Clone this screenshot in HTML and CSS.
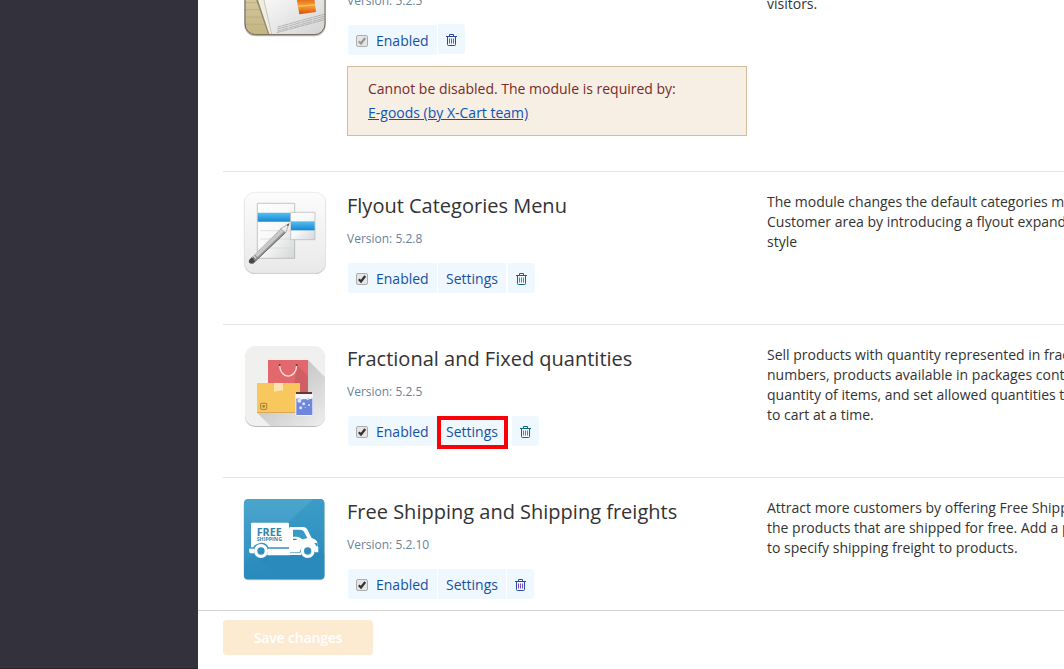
FILE: index.html
```html
<!DOCTYPE html>
<html lang="en">
<head>
<meta charset="utf-8">
<title>Modules</title>
<link rel="stylesheet" href="styles.css">
</head>
<body>
<svg class="sprite" aria-hidden="true">
  <symbol id="trash" viewBox="0 0 11 12">
    <path d="M3.5 2V.5h4V2M0 2.5h11M1.5 3v7.5q0 1 1 1h6q1 0 1-1V3" fill="none" stroke="currentColor"/>
    <path class="trash-ribs" d="M3.5 4.5v5M5.5 4.5v5M7.5 4.5v5" fill="none"/>
  </symbol>
  <symbol id="check" viewBox="0 0 12 12">
    <rect x=".5" y=".5" width="11" height="11" rx="1.5" fill="#e6e6e6" stroke="#adadad"/>
    <path d="M2.8 6.2 5 8.5 9.2 3" fill="none" stroke="currentColor" stroke-width="2.2"/>
  </symbol>
</svg>
<aside class="sidebar"></aside>
<main class="main">
  <div class="modules">
    <section class="module">
      <svg class="module-icon" viewBox="21 18 258 258">
        <defs>
          <linearGradient id="sand" x2="0" y2="1"><stop offset="0" stop-color="#e8dfc0"/><stop offset="1" stop-color="#c3b482"/></linearGradient>
          <linearGradient id="paper" x2="1" y2="1"><stop offset="0" stop-color="#fff"/><stop offset="1" stop-color="#d2d2d2"/></linearGradient>
          <linearGradient id="sunset" x2="0" y2="1"><stop offset="0" stop-color="#d94c08"/><stop offset=".55" stop-color="#f7a238"/><stop offset="1" stop-color="#d64d08"/></linearGradient>
          <clipPath id="iconClip"><rect x="30" y="22" width="240" height="240" rx="31"/></clipPath>
        </defs>
        <rect x="28" y="26" width="244" height="242" rx="33" fill="#bbb"/>
        <g clip-path="url(#iconClip)">
          <path d="M28 20h244v244H28z" fill="url(#sand)"/>
          <path d="M28 167h70M28 188h75M28 210h80M28 232h85" stroke="#b5a777" stroke-width="2"/>
          <path d="M50 120 100 264h12L62 120z" fill="#968a65"/>
          <path d="M56 120 104 264h12L76 120z" fill="#efeee5"/>
          <path d="M78 120h195v144H111z" fill="url(#paper)"/>
          <path d="m78 120 32 142" stroke="#ccc6b4" stroke-width="3"/>
          <path d="m184 150 53-4 6 49-50 7z" fill="url(#sunset)"/>
          <path d="m190 178 50-5" stroke="#ffc35c" stroke-width="4"/>
          <path d="m128 240 142-39M127 246l143-39M127 252l143-39M125 257l145-39" stroke="#aaa" stroke-width="2.5" stroke-dasharray="12 1 22 2"/>
        </g>
        <rect x="30" y="22" width="240" height="241" rx="32" fill="none" stroke="#6f6754" stroke-width="3"/>
      </svg>
      <div class="module-info">
        <h2 class="module-name"></h2>
        <div class="module-version">Version: 5.2.5</div>
        <div class="actions">
          <span class="action action-enabled is-locked"><svg class="checkbox"><use href="#check"/></svg>Enabled</span>
          <span class="action action-trash is-raised"><svg class="trash trash-violet"><use href="#trash"/></svg></span>
        </div>
        <div class="notice">Cannot be disabled. The module is required by:<br><a class="notice-link" href="#">E-goods (by X-Cart team)</a></div>
      </div>
      <p class="module-text is-cut">visitors.</p>
    </section>

    <section class="module">
      <svg class="module-icon" viewBox="21 18 258 258">
        <defs>
          <linearGradient id="tile" x2="0" y2="1"><stop offset="0" stop-color="#fcfcfc"/><stop offset="1" stop-color="#e9e9e9"/></linearGradient>
          <linearGradient id="bar" x2="0" y2="1"><stop offset="0" stop-color="#55bff0"/><stop offset="1" stop-color="#1488d4"/></linearGradient>
          <linearGradient id="sheet" x2="1" y2="1"><stop offset="0" stop-color="#fff"/><stop offset=".5" stop-color="#f8f8f8"/><stop offset="1" stop-color="#d4d7d8"/></linearGradient>
        </defs>
        <rect x="27" y="24" width="246" height="243" rx="32" fill="#c6cacc"/>
        <rect x="28" y="22" width="244" height="242" rx="31" fill="url(#tile)" stroke="#e4e4e4" stroke-width="2"/>
        <path d="M67 55h112v165H67z" fill="url(#sheet)" stroke="#aaa" stroke-width="2"/>
        <path d="M76 137h95M76 162h95M76 189h95" stroke="#d4d4d4" stroke-width="2"/>
        <path d="M68 83h99v27H68z" fill="url(#bar)"/>
        <path d="M167 82h73v82h-73z" fill="url(#sheet)" stroke="#b5b5b5" stroke-width="2"/>
        <path d="M168 109h71v27h-71z" fill="url(#bar)"/>
        <path d="m42 226 95-95 25-15-10 27-98 93q-14 2-12-10z" fill="#999"/>
        <path d="m50 218 89-87 8 8-90 87z" fill="#c9c9c9"/>
        <path d="m54 235 98-93" stroke="#6a6a6a" stroke-width="3"/>
        <path d="m137 131 25-15-10 27z" fill="#eee" stroke="#888" stroke-width="1.5"/>
        <path d="m155 120 8-5-4 9z" fill="#444"/>
        <path d="m42 226 8-9q8 2 10 12l-6 6q-14 3-12-9z" fill="#484848"/>
        <path d="m53 215 10 11m-4-16 9 10" stroke="#777" stroke-width="3"/>
      </svg>
      <div class="module-info">
        <h2 class="module-name">Flyout Categories Menu</h2>
        <div class="module-version">Version: 5.2.8</div>
        <div class="actions">
          <span class="action action-enabled"><svg class="checkbox"><use href="#check"/></svg>Enabled</span>
          <span class="action">Settings</span>
          <span class="action action-trash"><svg class="trash trash-green"><use href="#trash"/></svg></span>
        </div>
      </div>
      <p class="module-text">The module changes the default categories menu in the<br>Customer area by introducing a flyout expandable menu<br>style</p>
    </section>

    <section class="module">
      <svg class="module-icon" viewBox="21 18 258 258">
        <defs>
          <linearGradient id="shade" gradientUnits="userSpaceOnUse" x1="150" y1="140" x2="260" y2="265"><stop offset="0" stop-color="#c8c8c8"/><stop offset="1" stop-color="#ededed"/></linearGradient>
        </defs>
        <rect x="30" y="27" width="240" height="240" rx="31" fill="#b9b9b9"/>
        <rect x="30" y="24" width="240" height="240" rx="31" fill="#f0f0ef"/>
        <path d="m219 66 51 52v115q-1 31-31 31H106l-40-40z" fill="url(#shade)"/>
        <path d="M99 66h120v100H99z" fill="#e2686d"/>
        <path d="m187 82 32 32v52h-46z" fill="#cf5f64"/>
        <path d="M134 83c2 42 49 42 51 0" fill="none" stroke="#f5e4e2" stroke-width="4"/>
        <circle cx="134" cy="81" r="3" fill="#7d3339"/><circle cx="185" cy="81" r="3" fill="#7d3339"/>
        <path d="M66 135h129v90H66z" fill="#f8c85f"/>
        <path d="M66 222h115v3H66z" fill="#d9a94d"/>
        <path d="M117 135h27v23q-13-2-27 4z" fill="#fde4b2"/>
        <rect x="77" y="196" width="18" height="18" rx="2" fill="none" stroke="#a77c34" stroke-width="3"/>
        <circle cx="86" cy="205" r="4" fill="#a77c34"/>
        <rect x="181" y="166" width="53" height="67" rx="4" fill="#f5f4f8"/>
        <path d="M184 179h48v52h-48z" fill="#6e87dc"/>
        <path d="M182 168h51v13q-9 5-14 0-8 5-12 1-11 6-14-1-7 2-11 0z" fill="#f6f4f5"/>
        <path d="M183 162h48v6h-48z" fill="#63383c"/>
        <g fill="#dce5ff"><circle cx="193" cy="188" r="6"/><circle cx="206" cy="197" r="4.5"/><circle cx="197" cy="209" r="4.5"/><circle cx="222" cy="201" r="3"/><circle cx="218" cy="184" r="3"/><circle cx="211" cy="208" r="1.5"/></g>
      </svg>
      <div class="module-info">
        <h2 class="module-name">Fractional and Fixed quantities</h2>
        <div class="module-version">Version: 5.2.5</div>
        <div class="actions">
          <span class="action action-enabled"><svg class="checkbox"><use href="#check"/></svg>Enabled</span>
          <span class="action is-highlighted">Settings</span>
          <span class="action action-trash"><svg class="trash trash-green"><use href="#trash"/></svg></span>
        </div>
      </div>
      <p class="module-text">Sell products with quantity represented in fractional<br>numbers, products available in packages containing a<br>quantity of items, and set allowed quantities to be added<br>to cart at a time.</p>
    </section>

    <section class="module">
      <svg class="module-icon" viewBox="21 21 258 258">
        <defs>
          <linearGradient id="blue" x2="0" y2="1"><stop offset="0" stop-color="#4ba6cd"/><stop offset="1" stop-color="#2b8abc"/></linearGradient>
          <linearGradient id="fade" x2="0" y2="1"><stop offset="0" stop-color="#2585b6"/><stop offset="1" stop-color="#2b8abc"/></linearGradient>
        </defs>
        <rect x="26" y="29" width="243" height="242" rx="13" fill="#c1c8cb"/>
        <rect x="27" y="27" width="241" height="241" rx="12" fill="url(#blue)"/>
        <path d="M27 220 235 27h21q12 0 12 12v217q0 12-12 12H39q-12 0-12-12z" fill="#238abc" opacity=".35"/>
        <path d="m60 196 72 72h124q12 0 12-12v-65l-33-33z" fill="url(#fade)" opacity=".6"/>
        <path d="M52 98h106q4 0 4 4v70h-62q-8-20-32-11-10 3-13 11h-7v-70q0-4 4-4z" fill="#fff"/>
        <path d="M42 176h15v14H45q-3-4-3-14zM99 176h63v-60q0-5 5-5h38q7 0 11 6l14 27q16 5 17 14v9l3 5v15h-10q-6-25-30-20-13 3-16 20l-26 2-4 7h-67z" fill="#fff"/>
        <path d="M174 119h23q6 0 9 5l11 20-9 3-7 1q-6-8-15-8h-12z" fill="#3b9ac5"/>
        <path d="M174 146h11v4h-11zM238 159l8 1v10z" fill="#2689b8"/>
        <path d="M166 187h32v8h-36z" fill="#fff"/>
        <path d="M165 188h31" stroke="#2b8abc" stroke-width="2"/>
        <circle cx="78" cy="183" r="16" fill="#318fbe" stroke="#fff" stroke-width="10"/>
        <circle cx="218" cy="183" r="16" fill="#318fbe" stroke="#fff" stroke-width="10"/>
        <text class="truck-free" x="65" y="137" textLength="75" lengthAdjust="spacingAndGlyphs">FREE</text>
        <text class="truck-shipping" x="65" y="153" textLength="76" lengthAdjust="spacingAndGlyphs">SHIPPING</text>
      </svg>
      <div class="module-info">
        <h2 class="module-name">Free Shipping and Shipping freights</h2>
        <div class="module-version">Version: 5.2.10</div>
        <div class="actions">
          <span class="action action-enabled"><svg class="checkbox"><use href="#check"/></svg>Enabled</span>
          <span class="action is-compact">Settings</span>
          <span class="action action-trash"><svg class="trash trash-violet"><use href="#trash"/></svg></span>
        </div>
      </div>
      <p class="module-text">Attract more customers by offering Free Shipping. Mark<br>the products that are shipped for free. Add a possibility<br>to specify shipping freight to products.</p>
    </section>
  </div>
  <footer class="footer"><button class="save" disabled>Save changes</button></footer>
</main>
</body>
</html>
```
FILE: styles.css
```css
* { box-sizing: border-box; }
body {
  margin: 0;
  height: 669px;
  display: flex;
  overflow: hidden;
  background: #fff;
  color: #333;
  font: 14px/20px "Open Sans", "Noto Sans", sans-serif;
}
.sprite { display: none; }
.sidebar { flex: 0 0 198px; background: #33323c; border-bottom: 1px solid #2b2529; }
.main { flex: 1; min-width: 0; display: flex; flex-direction: column; }
.modules { flex: 1; min-height: 0; overflow: hidden; padding-left: 25px; }
.module {
  display: flex;
  height: 153px;
  border-top: 1px solid #e4e4e4;
  white-space: nowrap;
}
.module:first-child { height: 238px; margin-top: -67px; }
.module-icon { flex: none; width: 86px; height: 86px; margin: 19px 19px 0 19px; }
.module-info { flex: 0 0 420px; padding-top: 20px; }
.module-name { margin: 0; height: 28px; font-size: 20px; line-height: 28px; font-weight: 400; }
.module-version { margin-top: 9px; color: #69829b; font-size: 12px; line-height: 20px; }
.actions { display: flex; gap: 1px; margin: 14px 0 0 1px; }
.action {
  height: 30px;
  padding: 2px 8px 0;
  background: #eff7ff;
  color: #1552a2;
  line-height: 28px;
}
.action-enabled { display: flex; align-items: center; width: 89px; border-radius: 3px 0 0 3px; }
.checkbox { width: 12px; height: 12px; margin-right: 8px; color: #333; }
.is-locked .checkbox { color: #999; }
.action-trash { width: 27px; margin-left: 1px; border-radius: 0 3px 3px 0; display: flex; align-items: center; }
.is-raised { margin: -1px 0 1px; }
.is-highlighted {
  width: 71px;
  height: 33px;
  margin: 0 2px -3px -1px;
  padding: 0 5px;
  border: 4px solid #fb0007;
  line-height: 24px;
}
.is-compact { margin-right: -1px; }
.trash { width: 11px; height: 12px; color: #1552a2; }
.trash-ribs { stroke: var(--ribs); }
.trash-green { --ribs: #3d9a6c; color: #12687f; }
.trash-violet { --ribs: #7a4bc4; color: #2a4aa2; }
.notice {
  width: 400px;
  height: 70px;
  margin-top: 11px;
  padding: 10px 20px;
  border: 1px solid #d5bc9c;
  background: #f7eee4;
  color: #762c29;
  line-height: 24px;
}
.notice-link { color: #0c55b7; }
.module-text { margin: 0; padding-top: 20px; }
.is-cut { padding-top: 60px; }
.truck-free { font: bold 30px "Open Sans", sans-serif; fill: #3685ad; }
.truck-shipping { font: bold 15px "Open Sans", sans-serif; fill: #3685ad; }
.footer { flex: 0 0 59px; border-top: 1px solid #d2d2d2; padding: 9px 25px; background: #fff; }
.save {
  width: 150px;
  height: 35px;
  padding: 1px 0 0;
  border: 0;
  border-radius: 4px;
  background: #fcead1;
  color: #fff;
  font: 600 14px/20px "Open Sans", sans-serif;
  letter-spacing: -0.15px;
}
```
